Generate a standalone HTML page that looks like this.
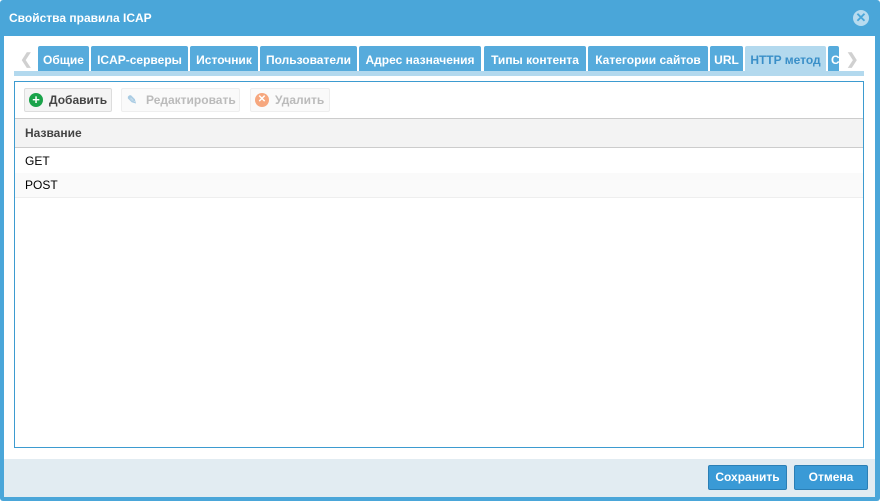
<!DOCTYPE html>
<html><head><meta charset="utf-8"><style>
*{box-sizing:border-box;margin:0;padding:0}
body{width:880px;height:501px;background:#fff;font-family:"Liberation Sans",sans-serif;font-size:12px;position:relative;overflow:hidden}
.dlg{position:absolute;left:0;top:0;width:880px;height:501px;background:#4aa6d9;border-radius:3px}
.title{position:absolute;left:9px;top:11px;color:#fff;font-weight:bold;font-size:12px}
.close{position:absolute;left:853px;top:10px;width:16px;height:16px;border-radius:50%;background:#b8dbef;color:#4aa6d9;font-size:13px;line-height:16px;text-align:center;font-weight:bold}
.body{position:absolute;left:4px;top:36px;width:871px;height:423px;background:#fff}
.foot{position:absolute;left:4px;top:459px;width:871px;height:38px;background:#e2ecf2}
.tab{position:absolute;top:46px;height:25px;background:#56abdc;color:#fff;font-weight:bold;font-size:12px;line-height:28px;text-align:center;white-space:nowrap;overflow:hidden;border-radius:2px 2px 0 0}
.tab.act{background:#b3d9ee;color:#3a8fc8}
.strip{position:absolute;left:14px;top:71px;width:850px;height:5px;background:#b3d9ee}
.arr{position:absolute;top:50px;color:#d0d0d0;font-size:15px;font-weight:bold}
.grid{position:absolute;left:14px;top:81px;width:850px;height:367px;border:1px solid #3d9bd0}
.btn{position:absolute;top:6px;height:24px;border:1px solid #ddd;border-radius:2px;background:#f4f4f4;font-weight:bold;line-height:22px;color:#444}
.btn.dis{color:#bbb;background:#fafafa;border-color:#eee}
.hdr{position:absolute;left:0;top:36px;width:848px;height:30px;background:#f3f3f3;border-top:1px solid #ccc;border-bottom:1px solid #ccc;font-weight:bold;color:#444;line-height:28px;padding-left:10px}
.row{position:absolute;left:0;width:848px;height:25px;border-bottom:1px solid #eee;line-height:24px;padding-left:10px;color:#000}
.fb{position:absolute;top:465px;height:25px;background:#3a9ad6;border:1px solid #2b7fb5;border-radius:2px;color:#fff;font-weight:bold;text-align:center;line-height:23px}
</style></head><body>
<div class="dlg">
<div class="title">Свойства правила ICAP</div>
<div class="close">✕</div>
<div class="body"></div>
<div class="foot"></div>
</div>
<div class="arr" style="left:20px">❮</div>
<div class="tab" style="left:38px;width:51px">Общие</div>
<div class="tab" style="left:91px;width:97px">ICAP-серверы</div>
<div class="tab" style="left:190px;width:68px">Источник</div>
<div class="tab" style="left:260px;width:97px">Пользователи</div>
<div class="tab" style="left:359px;width:122px">Адрес назначения</div>
<div class="tab" style="left:484px;width:102px">Типы контента</div>
<div class="tab" style="left:588px;width:120px">Категории сайтов</div>
<div class="tab" style="left:710px;width:33px">URL</div>
<div class="tab act" style="left:745px;width:81px">HTTP метод</div>
<div class="tab" style="left:828px;width:11px;text-align:left;padding-left:3px">С</div>
<div class="arr" style="left:846px">❯</div>
<div class="strip"></div>
<div class="grid">
<div class="btn" style="left:9px;width:88px"><span style="position:absolute;left:4px;top:4px;width:14px;height:14px;border-radius:50%;background:#1aa34a;color:#fff;font-size:13px;line-height:14px;text-align:center">+</span><span style="position:absolute;left:24px">Добавить</span></div>
<div class="btn dis" style="left:106px;width:119px"><span style="position:absolute;left:5px;top:0;color:#a8cbe3">✎</span><span style="position:absolute;left:24px">Редактировать</span></div>
<div class="btn dis" style="left:235px;width:80px"><span style="position:absolute;left:4px;top:4px;width:14px;height:14px;border-radius:50%;background:#f6a77e;color:#fff;font-size:10px;line-height:14px;text-align:center">✕</span><span style="position:absolute;left:24px">Удалить</span></div>
<div class="hdr">Название</div>
<div class="row" style="top:67px">GET</div>
<div class="row" style="top:91px;background:#fafafa">POST</div>
</div>
<div class="fb" style="left:708px;width:79px">Сохранить</div>
<div class="fb" style="left:794px;width:74px">Отмена</div>
</body></html>
